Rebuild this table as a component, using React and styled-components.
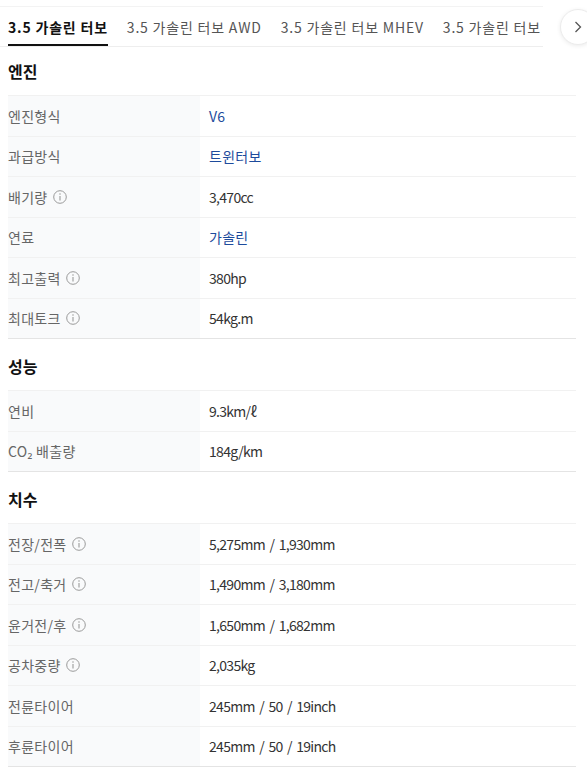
import React from 'react';
import styled, { createGlobalStyle } from 'styled-components';

const GlobalStyle = createGlobalStyle`
  html, body {
    margin: 0;
    padding: 0;
    background: #fff;
    overflow: hidden;
  }
  body {
    font-family: "Noto Sans CJK KR", "Noto Sans", "Liberation Sans", sans-serif;
    color: #333;
  }
`;

const Page = styled.div`
  width: 587px;
  padding-top: 6px;
`;

const TabBar = styled.div`
  display: flex;
  align-items: center;
`;

const TabScroller = styled.div`
  flex: 0 0 543px;
  height: 41px;
  display: flex;
  gap: 19px;
  padding-left: 8px;
  box-sizing: border-box;
  overflow: hidden;
  white-space: nowrap;
  border-top: 1px solid #f3f3f3;
  border-bottom: 1px solid #eeeeee;
`;

const Tab = styled.div`
  flex: 0 0 auto;
  height: 39px;
  box-sizing: border-box;
  display: flex;
  align-items: center;
  padding-top: 2px;
  font-size: 14px;
  letter-spacing: 0.8px;
  color: ${props => (props.active ? '#111' : '#555')};
  font-weight: ${props => (props.active ? 700 : 400)};
  border-bottom: 2px solid ${props => (props.active ? '#111' : 'transparent')};
`;

const NextButton = styled.button`
  flex: 0 0 36px;
  width: 36px;
  height: 36px;
  margin-left: 17px;
  border-radius: 50%;
  border: 1px solid #ececec;
  background: #fff;
  box-shadow: 0 1px 4px rgba(0, 0, 0, 0.08);
  display: flex;
  align-items: center;
  justify-content: flex-start;
  padding-left: 13px;
  box-sizing: border-box;
`;

const Content = styled.div`
  padding: 0 11px 0 8px;
`;

const Section = styled.section`
  & + & {
    margin-top: 3px;
  }
`;

const SectionTitle = styled.h3`
  margin: 0;
  height: 48px;
  display: flex;
  align-items: center;
  font-size: 16px;
  font-weight: 700;
  color: #111;
`;

const Table = styled.div`
  border-bottom: 1px solid #e4e4e4;
`;

const Row = styled.div`
  display: grid;
  grid-template-columns: 192px 1fr;
  height: 40.5px;
  box-sizing: border-box;
  border-top: 1px solid #f1f1f1;
`;

const Label = styled.div`
  display: flex;
  align-items: center;
  gap: 5px;
  background: #f9fafb;
  font-size: 14px;
  letter-spacing: 0.3px;
  color: #666;
`;

const Value = styled.div`
  display: flex;
  align-items: center;
  padding-left: 9px;
  font-size: 14px;
  white-space: pre;
  letter-spacing: ${props => (props.link ? '0.3px' : '-0.7px')};
  word-spacing: ${props => (props.link ? '0' : '2px')};
  color: ${props => (props.link ? '#1d4b9c' : '#333')};
`;

const InfoIcon = () => (
  <svg width="14" height="14" viewBox="0 0 14 14" aria-hidden="true">
    <circle cx="7" cy="7" r="6.3" fill="none" stroke="#9a9a9a" strokeWidth="1" />
    <line x1="7" y1="6" x2="7" y2="10.5" stroke="#9a9a9a" strokeWidth="1.1" />
    <circle cx="7" cy="4.1" r="0.75" fill="#9a9a9a" />
  </svg>
);

const ChevronRight = () => (
  <svg width="8" height="12" viewBox="0 0 8 12" aria-hidden="true">
    <path d="M1.5 1 L6.5 6 L1.5 11" fill="none" stroke="#555" strokeWidth="1.3" />
  </svg>
);

const tabs = [
  '3.5 가솔린 터보',
  '3.5 가솔린 터보 AWD',
  '3.5 가솔린 터보 MHEV',
  '3.5 가솔린 터보',
];

const specs = [
  {
    title: '엔진',
    rows: [
      { label: '엔진형식', value: 'V6', link: true },
      { label: '과급방식', value: '트윈터보', link: true },
      { label: '배기량', value: '3,470cc', info: true },
      { label: '연료', value: '가솔린', link: true },
      { label: '최고출력', value: '380hp', info: true },
      { label: '최대토크', value: '54kg.m', info: true },
    ],
  },
  {
    title: '성능',
    rows: [
      { label: '연비', value: '9.3km/ℓ' },
      { label: 'CO₂ 배출량', value: '184g/km' },
    ],
  },
  {
    title: '치수',
    rows: [
      { label: '전장/전폭', value: '5,275mm / 1,930mm', info: true },
      { label: '전고/축거', value: '1,490mm / 3,180mm', info: true },
      { label: '윤거전/후', value: '1,650mm / 1,682mm', info: true },
      { label: '공차중량', value: '2,035kg', info: true },
      { label: '전륜타이어', value: '245mm / 50 / 19inch' },
      { label: '후륜타이어', value: '245mm / 50 / 19inch' },
    ],
  },
];

export default function App() {
  return (
    <Page>
      <GlobalStyle />
      <TabBar>
        <TabScroller>
          {tabs.map((tab, index) => (
            <Tab key={`tab-${index}`} active={index === 0}>
              {tab}
            </Tab>
          ))}
        </TabScroller>
        <NextButton aria-label="다음">
          <ChevronRight />
        </NextButton>
      </TabBar>
      <Content>
        {specs.map(section => (
          <Section key={section.title}>
            <SectionTitle>{section.title}</SectionTitle>
            <Table>
              {section.rows.map(row => (
                <Row key={row.label}>
                  <Label>
                    {row.label}
                    {row.info && <InfoIcon />}
                  </Label>
                  <Value link={row.link}>{row.value}</Value>
                </Row>
              ))}
            </Table>
          </Section>
        ))}
      </Content>
    </Page>
  );
}
